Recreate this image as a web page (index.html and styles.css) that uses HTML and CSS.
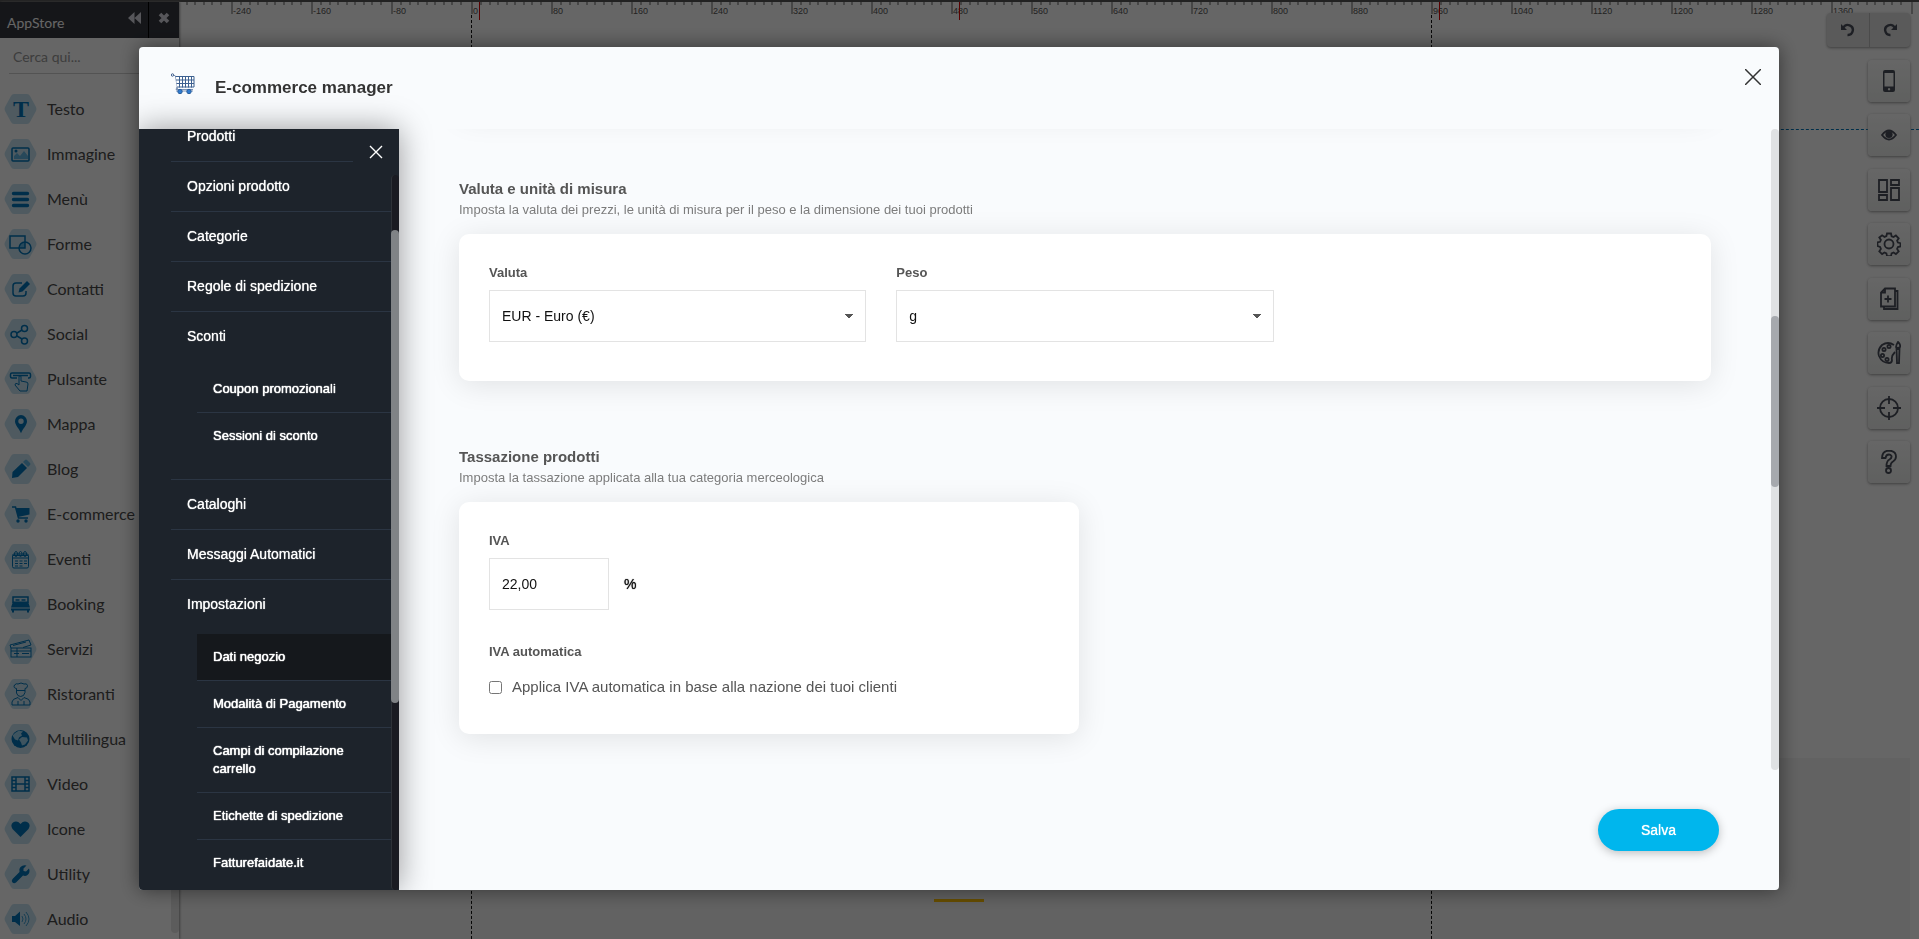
FILE: index.html
```html
<!DOCTYPE html>
<html lang="it">
<head>
<meta charset="utf-8">
<title>E-commerce manager</title>
<link rel="stylesheet" href="styles.css">
</head>
<body>
<svg class="defs" aria-hidden="true">
  <symbol id="hex" viewBox="0 0 33 30"><path d="M10 0h13q2 0 3 2l6 11q1 2 0 4l-6 11q-1 2-3 2H10q-2 0-3-2L1 17q-1-2 0-4L7 2q1-2 3-2z" fill="#c6e2f0"/></symbol>
</svg>

<div class="editor">
  <aside class="sidebar">
    <header class="side-head">
      <span class="side-title">AppStore</span>
      <button class="head-btn" aria-label="Comprimi"><svg width="13" height="12" viewBox="0 0 13 12"><path d="M6.500 0v12L0 6zM13 0v12L6.500 6z" fill="#d8d8e0"/></svg></button>
      <button class="head-btn close-btn" aria-label="Chiudi"><svg width="12" height="12" viewBox="0 0 12 12"><path d="M2 2l8 8M10 2l-8 8" stroke="#d8d8e0" stroke-width="3.600"/></svg></button>
    </header>
    <div class="search"><input type="text" placeholder="Cerca qui..." aria-label="Cerca qui"></div>
    <nav class="apps">
      <a href="#"><svg viewBox="0 0 33 30"><use href="#hex"/><text x="17" y="23" text-anchor="middle" class="t-glyph">T</text></svg>Testo</a>
      <a href="#"><svg viewBox="0 0 33 30"><use href="#hex"/><rect x="8" y="9" width="17" height="13" rx="1" class="s"/><path d="M10 20v-3l3-3 3 3 4-5 4 5v3z" class="l"/><circle cx="12" cy="12" r="1.500" class="d"/></svg>Immagine</a>
      <a href="#"><svg viewBox="0 0 33 30"><use href="#hex"/><path d="M9.500 9.500h14M9.500 15.500h14M9.500 21.500h14" class="s thick"/></svg>Menù</a>
      <a href="#"><svg viewBox="0 0 33 30"><use href="#hex"/><path d="M15 19a6 6 0 0 1 6-6v6z" class="l"/><rect x="6" y="7" width="15" height="12" class="s"/><circle cx="21" cy="19" r="6" class="s"/></svg>Forme</a>
      <a href="#"><svg viewBox="0 0 33 30"><use href="#hex"/><path d="M18 9h-6q-3 0-3 3v7q0 3 3 3h7q3 0 3-3v-2" class="s"/><path d="M23 7l3 3-7.500 7.500-4 1 1-4z" class="d"/></svg>Contatti</a>
      <a href="#"><svg viewBox="0 0 33 30"><use href="#hex"/><path d="M13 14l5-3M13 17l5 3" class="s"/><circle cx="10" cy="15.500" r="3" class="s"/><circle cx="20.500" cy="9.500" r="3" class="s"/><circle cx="20.500" cy="22" r="3" class="s"/></svg>Social</a>
      <a href="#"><svg viewBox="0 0 33 30"><use href="#hex"/><path d="M13 14H8q-1.500 0-1.500-1.500v-2Q6.500 9 8 9h17q1.500 0 1.500 1.500v2q0 1.500-1.500 1.500h-1M9 11.500h15" class="s"/><path d="M15 21v-8q0-1.500 1-1.500t1 1.500v4l5 1q2 0 2 2l-1 7h-7l-5-6q0-2 2-1.500z" class="s thin"/></svg>Pulsante</a>
      <a href="#"><svg viewBox="0 0 33 30"><use href="#hex"/><path d="M17 6a6.200 6.200 0 0 1 6 6.200c0 4-4 7-6 12-2-5-6-8-6-12A6.200 6.200 0 0 1 17 6zm0 3.500a2.700 2.700 0 1 0 0 5.400 2.700 2.700 0 0 0 0-5.400z" class="d"/></svg>Mappa</a>
      <a href="#"><svg viewBox="0 0 33 30"><use href="#hex"/><path d="M18 9l5 5-9 9-6 1 .5-6z" class="d"/><path d="M19 8l2-2q1-1 2 0l3 3q1 1 0 2l-2 2z" class="l"/></svg>Blog</a>
      <a href="#"><svg viewBox="0 0 33 30"><use href="#hex"/><path d="M8 8h3.500l3 11H24" class="s"/><path d="M12 9h13.500v6.500L14 18z" class="d"/><circle cx="14" cy="22" r="1.700" class="d"/><circle cx="22" cy="22" r="1.700" class="d"/></svg>E-commerce</a>
      <a href="#"><svg viewBox="0 0 33 30"><use href="#hex"/><rect x="8.500" y="10" width="16" height="14" rx="1.500" class="s thin"/><path d="M9 11.500h15M9 14h15" class="s thin"/><path d="M11 17h3m1.500 0h3m1.500 0h3M11 19.500h3m1.500 0h3m1.500 0h3M11 22h3m1.500 0h3" class="s thin"/><ellipse cx="12" cy="10" rx="1.500" ry="2.500" class="s thin"/><ellipse cx="16.500" cy="10" rx="1.500" ry="2.500" class="s thin"/><ellipse cx="21" cy="10" rx="1.500" ry="2.500" class="s thin"/></svg>Eventi</a>
      <a href="#"><svg viewBox="0 0 33 30"><use href="#hex"/><path d="M9 14V8h15v6" class="s"/><path d="M9 12.500h15l2 6H7zM7 19.500h19v2H7zM8 21.500h2v2H8zM23 21.500h2v2h-2z" class="d"/><path d="M11.500 11h4m2 0h4" class="s"/></svg>Booking</a>
      <a href="#"><svg viewBox="0 0 33 30"><use href="#hex"/><rect x="7" y="14" width="20" height="9" class="s thin"/><path d="M7 14l-1-3 19-5 2 5-8 2.500M9 11.500l13-3.500M7 17h20M10 19.500h5M18 19.500h7M13 14v9" class="s thin"/></svg>Servizi</a>
      <a href="#"><svg viewBox="0 0 33 30"><use href="#hex"/><path d="M12.500 9.500Q9 9 10.500 6q2-2 3.500-1 3-2 6 0 3-1 3.500 1.500 0 3-2.500 3v4q-1 4-4.300 4T12.500 14zM12.500 11.500h8.500M8 26v-3q0-3 6-4.500l3 3 3-3q6 1.500 6 4.500v3zM14 22v4M20 22v4" class="s thin"/></svg>Ristoranti</a>
      <a href="#"><svg viewBox="0 0 33 30"><use href="#hex"/><circle cx="16.500" cy="15" r="9" class="d"/><path d="M11 9l4-2.500 4 1-2 2 1 2-3 2-1 3-3-1-2.500-4zM18 13l5 .5 1 3-3 4-3 1-1-3-2-3z" fill="#9bd3ee"/></svg>Multilingua</a>
      <a href="#"><svg viewBox="0 0 33 30"><use href="#hex"/><rect x="8" y="8" width="17" height="14" class="s"/><path d="M12 8v14M21 8v14M12 15h9M8 11.500h4M8 15h4M8 18.500h4M21 11.500h4M21 15h4M21 18.500h4" class="s"/></svg>Video</a>
      <a href="#"><svg viewBox="0 0 33 30"><use href="#hex"/><path d="M16.500 23l-8-8q-2.500-4 .5-6.500 4-2.500 7.500 1.500 3.500-4 7.500-1.500 3 2.500.5 6.500z" class="d"/></svg>Icone</a>
      <a href="#"><svg viewBox="0 0 33 30"><use href="#hex"/><path d="M22.500 6.500l-3 3v2.500l2.500.5 3-3q1.500 4-1.500 6.500-2 1.500-4.500.5l-7 7q-2 1.500-3.500 0t0-3.500l7-7q-1-3 1-5 2.500-2.500 6-1.500z" class="d"/></svg>Utility</a>
      <a href="#"><svg viewBox="0 0 33 30"><use href="#hex"/><path d="M8 12h3l5-4.500v14.500l-5-4H8z" class="d"/><path d="M18 12q2 3 0 6M20 10q4 5 0 10M22 8q6 7 0 14" class="s thin pale"/></svg>Audio</a>
    </nav>
    <div class="side-scroll"></div>
  </aside>

  <main class="canvas">
    <div class="page-area"></div>
    <div class="below-area"></div>
    <div class="ruler">
      <svg class="ticks" width="100%" height="20" aria-hidden="true">
        <defs><pattern id="tick" x="52" width="80" height="20" patternUnits="userSpaceOnUse">
          <path d="M0 0h2v12H0zM9 0h2v3H9zM18 0h2v3h-2zM26 0h2v3h-2zM35 0h2v3h-2zM43 0h2v3h-2zM52 0h2v3h-2zM60 0h2v3h-2zM69 0h2v3h-2z" fill="#b0b0b0"/></pattern></defs>
        <rect width="100%" height="20" fill="url(#tick)"/>
      </svg>
      <span>-240</span><span>-160</span><span>-80</span><span>0</span><span>80</span><span>160</span><span>240</span><span>320</span><span>400</span><span>480</span><span>560</span><span>640</span><span>720</span><span>800</span><span>880</span><span>960</span><span>1040</span><span>1120</span><span>1200</span><span>1280</span><span>1360</span>
    </div>
    <i class="mark m1"></i><i class="mark m2"></i><i class="mark m3"></i>
    <i class="guide g1"></i><i class="guide g2"></i><i class="guide-h"></i>
    <i class="handle"></i>
    <div class="tools">
      <div class="undo">
        <button aria-label="Annulla"><svg width="14" height="14" viewBox="0 0 14 14"><path d="M2.500 4.500A5 5 0 1 1 6.500 12" fill="none" stroke="#4a4e5a" stroke-width="2.400"/><path d="M0 1v6h6z" fill="#4a4e5a"/></svg></button>
        <button aria-label="Ripeti"><svg width="14" height="14" viewBox="0 0 14 14"><path d="M11.500 4.500A5 5 0 1 0 7.500 12" fill="none" stroke="#4a4e5a" stroke-width="2.400"/><path d="M14 1v6H8z" fill="#4a4e5a"/></svg></button>
      </div>
      <button class="tool" aria-label="Mobile"><svg viewBox="0 0 24 24"><path d="M8 1h8q2 0 2 2v18q0 2-2 2H8q-2 0-2-2V3q0-2 2-2zM7.500 4v13.500h9V4zM12 19a1.200 1.200 0 1 0 .1 0z" fill="#4a4e5a" fill-rule="evenodd"/></svg></button>
      <button class="tool" aria-label="Anteprima"><svg viewBox="0 0 24 24"><path d="M5 12q7-9 14 0-7 9-14 0z" class="i"/><circle cx="12" cy="11.500" r="3.600" fill="#4a4e5a"/></svg></button>
      <button class="tool" aria-label="Layout"><svg viewBox="0 0 24 24"><path d="M2 2h8v12H2zM2 17h8v5H2zM14 2h8v5h-8zM14 10h8v12h-8z" class="i"/></svg></button>
      <button class="tool" aria-label="Impostazioni"><svg viewBox="0 0 24 24"><circle cx="12" cy="12" r="4.500" class="i"/><path d="M10 1.500h4l.6 2.800 1.900.8 2.400-1.600 2.800 2.800-1.600 2.400.8 1.900 2.600.6v3.200l-2.600.6-.8 1.900 1.600 2.400-2.800 2.800-2.400-1.600-1.900.8-.6 2.800h-4l-.6-2.800-1.900-.8-2.400 1.600-2.800-2.800 1.600-2.400-.8-1.900L.5 14v-3.600l2.600-.6.8-1.900-1.600-2.400 2.800-2.200 2.400 1.600 1.900-.8z" class="i"/></svg></button>
      <button class="tool" aria-label="Pagine"><svg viewBox="0 0 24 24"><path d="M8 1.500h10v18H4v-14zM8 1.500v4H4M18 4h2.500v18H7v-2.500M11 8.500v7M7.500 12h7" class="i"/></svg></button>
      <button class="tool" aria-label="Stile"><svg viewBox="0 0 24 24"><path d="M17 4Q11 0 5 4q-5 5-3 11 3 7 10 7 3 0 3-3-1-4 3-8" class="i"/><circle cx="12" cy="5.500" r="1.600" class="i"/><circle cx="7" cy="8.500" r="1.600" class="i"/><circle cx="5.500" cy="14.500" r="1.600" class="i"/><circle cx="10" cy="18.500" r="1.600" class="i"/><path d="M21 1q3 3 2 5-2 2-4 0 0-2 2-5zM19.500 8h3l-.5 14h-2z" class="i"/></svg></button>
      <button class="tool" aria-label="Centra"><svg viewBox="0 0 24 24"><circle cx="12" cy="12" r="9" class="i"/><path d="M12 0v8M12 16v8M0 12h8M16 12h8" class="i"/></svg></button>
      <button class="tool" aria-label="Aiuto"><svg viewBox="0 0 24 24"><path d="M5 8q0-7 7-7.500 7 .5 7 6 0 3-3 5-2.500 1.500-2.500 4.500h-4q0-5 3-6.500 2.500-1.500 2-3.500-1-1.500-2.500-1.500Q9 4.500 8.500 8z" class="i"/><circle cx="11.500" cy="20.500" r="2.500" class="i"/></svg></button>
    </div>
  </main>
</div>

<div class="overlay">
  <section class="modal" role="dialog" aria-labelledby="mt">
    <header class="modal-head">
      <svg class="cart" width="24" height="22" viewBox="0 0 24 22"><circle cx="1.500" cy="2" r="1.200" fill="#fff" stroke="#3a5a8a"/><path d="M2.500 2l2 1 2 13M5 18H22" fill="none" stroke="#7d92b4"/><path d="M5 3.500h18v11H6z" fill="#fff"/><path d="M4.500 3.500h18.500v10.500H6M5 7h18M5.500 10.500h17.500M8.500 3.500v11M11.500 3.500v11M14.500 3.500v11M17.500 3.500v11M20.500 3.500v11" fill="none" stroke="#3d6090"/><path d="M6 14l-1 2.500h17" fill="none" stroke="#7d92b4"/><circle cx="9" cy="18.500" r="2.200" fill="#2f7bd0" stroke="#2b5f9c"/><circle cx="18" cy="18.500" r="2.200" fill="#2f7bd0" stroke="#2b5f9c"/></svg>
      <h1 id="mt">E-commerce manager</h1>
      <button class="x-modal" aria-label="Chiudi"><svg width="16" height="16" viewBox="0 0 16 16"><path d="M0 0l16 16M16 0L0 16" stroke="#333" stroke-width="1.500"/></svg></button>
    </header>
    <div class="modal-body">
      <nav class="menu">
        <ul class="menu-list">
          <li><a href="#">Prodotti</a></li>
          <li><a href="#">Opzioni prodotto</a></li>
          <li><a href="#">Categorie</a></li>
          <li><a href="#">Regole di spedizione</a></li>
          <li><a href="#">Sconti</a>
            <ul class="sub">
              <li><a href="#">Coupon promozionali</a></li>
              <li><a href="#">Sessioni di sconto</a></li>
            </ul>
          </li>
          <li><a href="#">Cataloghi</a></li>
          <li><a href="#">Messaggi Automatici</a></li>
          <li><a href="#">Impostazioni</a>
            <ul class="sub">
              <li><a href="#" class="active">Dati negozio</a></li>
              <li><a href="#">Modalità di Pagamento</a></li>
              <li><a href="#">Campi di compilazione carrello</a></li>
              <li><a href="#">Etichette di spedizione</a></li>
              <li><a href="#">Fatturefaidate.it</a></li>
            </ul>
          </li>
        </ul>
        <div class="menu-track"><div class="menu-thumb"></div></div>
        <button class="x-menu" aria-label="Chiudi menu"><svg width="14" height="14" viewBox="0 0 14 14"><path d="M1 1l12 12M13 1L1 13" stroke="#fff" stroke-width="1.400"/></svg></button>
      </nav>
      <form class="content">
        <div class="scroller">
          <div class="card previous"></div>
          <section>
            <h2>Valuta e unità di misura</h2>
            <p>Imposta la valuta dei prezzi, le unità di misura per il peso e la dimensione dei tuoi prodotti</p>
            <div class="card three">
              <div class="field"><label for="valuta">Valuta</label><select id="valuta"><option>EUR - Euro (€)</option></select></div>
              <div class="field"><label for="peso">Peso</label><select id="peso"><option>g</option></select></div>
            </div>
          </section>
          <section>
            <h2>Tassazione prodotti</h2>
            <p>Imposta la tassazione applicata alla tua categoria merceologica</p>
            <div class="halves">
              <div class="card">
                <div class="field"><label for="iva">IVA</label><div class="with-unit"><input id="iva" type="text" value="22,00"><span>%</span></div></div>
                <div class="field auto"><strong>IVA automatica</strong><label class="check"><input type="checkbox">Applica IVA automatica in base alla nazione dei tuoi clienti</label></div>
              </div>
            </div>
          </section>
          <div class="track"><div class="thumb"></div></div>
        </div>
        <footer class="actions"><button type="button" class="save">Salva</button></footer>
      </form>
    </div>
  </section>
</div>
</body>
</html>
```
FILE: styles.css
```css
* { box-sizing: border-box; }
body { margin: 0; height: 100vh; overflow: hidden; font-family: "Liberation Sans", Arial, sans-serif; font-size: 14px; }
button { border: 0; padding: 0; background: none; font: inherit; display: flex; align-items: center; justify-content: center; }
a { color: inherit; text-decoration: none; }
ul { list-style: none; margin: 0; padding: 0; }
.defs { position: absolute; width: 0; height: 0; }

/* editor behind the dialog */
.editor { display: flex; height: 100vh; border-top: 2px solid #555; font-family: Lato, sans-serif; }
.sidebar { position: relative; width: 179px; flex: none; background: #fff; overflow: hidden; box-shadow: 1px 0 2px #999; z-index: 1; }
.side-head { display: flex; height: 36px; background: #353840; color: #fff; }
.side-title { flex: 1; padding: 11px 0 0 7px; font-size: 14px; line-height: 20px; }
.head-btn { width: 27px; padding-bottom: 4px; }
.close-btn { width: 31px; border-left: 1px solid #000; }
.search { height: 48px; padding: 5px 9px 0; }
.search input { width: 100%; height: 31px; border: 0; border-bottom: 1px solid #d0d0d0; padding: 0 4px 4px; background: none; font: 14px Lato, sans-serif; }
.search input::placeholder { color: #999; }
.apps a { display: flex; align-items: center; gap: 10px; height: 45px; padding-left: 4px; font-size: 16px; color: #4a4a4a; }
.apps svg { width: 33px; height: 30px; flex: none; }
.t-glyph { font: bold 24px "Liberation Serif", serif; fill: #0074b8; }
.d { fill: #0074b8; }
.l { fill: #62b4e0; }
.s { fill: none; stroke: #0074b8; stroke-width: 1.5; }
.thick { stroke-width: 3.4; stroke-linecap: round; }
.thin { stroke-width: 1; }
.pale { stroke: #3b9bd0; }
.side-scroll { position: absolute; right: 0; bottom: 6px; width: 8px; height: 300px; border-radius: 4px; background: #e6e6e6; }

.canvas { position: relative; flex: 1; display: flex; flex-direction: column; background: #fff; }
.page-area { height: 756px; }
.below-area { flex: 1; margin-right: 9px; background: #f4f4f4; }
.ruler { position: absolute; top: 0; left: 0; right: 0; height: 20px; padding: 4px 0 0 54px; display: flex; overflow: hidden; font: 9px/10px "Liberation Sans", Arial, sans-serif; color: #555; }
.ruler span { flex: none; width: 80px; }
.ticks { position: absolute; left: 0; top: 0; }
.mark { position: absolute; top: 0; width: 1px; height: 18px; background: #e00000; }
.m1 { left: 300px; } .m2 { left: 780px; } .m3 { left: 1260px; }
.guide { position: absolute; top: 13px; bottom: 0; border-left: 1px dashed #111; }
.g1 { left: 292px; } .g2 { left: 1252px; }
.guide-h { position: absolute; left: 0; right: 0; top: 127px; border-top: 1px dashed #0075b8; }
.handle { position: absolute; left: 755px; bottom: 37px; width: 50px; height: 3px; background: #ffc000; }
.tools { position: absolute; top: 11px; right: 9px; height: 470px; display: flex; flex-direction: column; align-items: flex-end; justify-content: space-between; }
.undo { display: flex; border-radius: 4px; background: #e2e2e2; box-shadow: 0 1px 3px #999; }
.undo button { width: 42px; height: 34px; }
.undo button + button { width: 41px; border-left: 1px solid #bbb; }
.tool { width: 42px; height: 42px; border-radius: 4px; background: linear-gradient(#fff, #eef0ee); box-shadow: 0 1px 3px #999; }
.tool svg { width: 24px; height: 24px; }
.i { fill: none; stroke: #4a4e5a; stroke-width: 1.8; }

/* dialog */
.overlay { position: fixed; inset: 0; z-index: 5; padding: 47px 140px 49px 139px; display: flex; background: rgba(0, 0, 0, .6); }
.modal { flex: 1; min-width: 0; display: flex; flex-direction: column; border-radius: 4px; background: #f9fbfd; box-shadow: 0 0 20px rgba(0, 0, 0, .5); overflow: hidden; }
.modal-head { height: 82px; flex: none; display: flex; align-items: center; padding: 0 18px 0 32px; }
.cart { margin: 0 20px 8px 0; }
h1 { flex: 1; margin: 0; font-size: 17px; line-height: 20px; color: #333; }
.x-modal { width: 16px; height: 16px; margin-bottom: 22px; }
.modal-body { flex: 1; min-height: 0; display: flex; }

.menu { position: relative; z-index: 1; width: 260px; flex: none; background: #1d232b; color: #fff; box-shadow: 0 0 30px rgba(0, 0, 0, .4); clip-path: inset(-40px -60px 0 0); }
.menu-list { height: 100%; overflow: hidden; padding: 0 8px 0 32px; }
.menu-list > li:first-child { margin-top: -17px; }
.menu-list > li { border-bottom: 1px solid #2b3543; }
.menu-list a { display: block; padding: 14px 16px 15px; line-height: 20px; font-size: 14px; text-shadow: 0 0 1px #fff; }
.sub { padding: 5px 0 20px 26px; }
.sub li + li { border-top: 1px solid #2b3543; }
.menu-list .sub a { padding: 14px 30px 14px 16px; line-height: 18px; font-size: 13px; text-shadow: 0 0 1px #fff, 0 0 1px #fff; }
.menu-list .sub .active { background: #15181c; }
.menu-track { position: absolute; right: 0; top: 46px; bottom: 0; width: 8px; border-left: 1px solid #2e3238; background: #1a1b22; border-radius: 4px; }
.menu-thumb { width: 8px; height: 473px; margin: 55px 0 0 -1px; border-radius: 4px; background: #808386; }
.x-menu { position: absolute; right: 0; top: 0; width: 46px; height: 46px; background: #1d232b; }

.content { flex: 1; min-width: 0; display: flex; flex-direction: column; }
.scroller { position: relative; flex: 1; min-height: 0; overflow: hidden; padding: 0 68px 0 60px; }
.card { border-radius: 10px; padding: 31px 30px 39px; background: #fff; box-shadow: 0 4px 30px rgba(0, 0, 0, .1); }
.previous { height: 80px; margin-top: -96px; }
section + section, .previous + section { padding-top: 66px; }
h2 { margin: 0; font-size: 15px; line-height: 20px; color: #555; }
p { margin: 1px 0 14px; font-size: 13px; line-height: 20px; color: #7c7c7c; }
.three { display: grid; grid-template-columns: repeat(3, 1fr); gap: 30px; }
.halves { display: grid; grid-template-columns: repeat(2, 1fr); gap: 12px; }
.field { display: flex; flex-direction: column; gap: 9px; font-size: 13px; line-height: 16px; color: #555; }
.field label, .field strong { font-weight: bold; }
select, .field input[type=text] { height: 52px; border: 1px solid #e3e3e3; border-radius: 0; padding: 0 12px; background: #fff; color: #111; font: 14px "Liberation Sans", Arial, sans-serif; }
select { width: 100%; appearance: none; background-image: linear-gradient(to bottom right, #555 50%, transparent 50%), linear-gradient(to bottom left, #555 50%, transparent 50%); background-size: 4px 5px; background-repeat: no-repeat; background-position: right 12px center, right 16px center; }
.with-unit { display: flex; align-items: center; gap: 15px; font-size: 14px; color: #111; text-shadow: 0 0 1px #111; }
.field input[type=text] { width: 120px; }
.auto { margin-top: 34px; gap: 19px; }
.field .check { display: flex; align-items: center; gap: 10px; font-size: 15px; font-weight: normal; }
.check input { width: 13px; height: 13px; margin: 0; }
.track { position: absolute; right: 0; top: 0; bottom: 0; width: 8px; border-radius: 4px; background: #dfe1e3; }
.thumb { height: 171px; margin-top: 187px; border-radius: 4px; background: #a6a9ae; }
.actions { flex: none; display: flex; justify-content: flex-end; padding: 39px 60px; }
.save { width: 121px; height: 42px; border-radius: 21px; background: #00b6ed; color: #fff; text-shadow: 0 0 1px #fff; box-shadow: 0 2px 10px rgba(0, 0, 0, .25); }
```
